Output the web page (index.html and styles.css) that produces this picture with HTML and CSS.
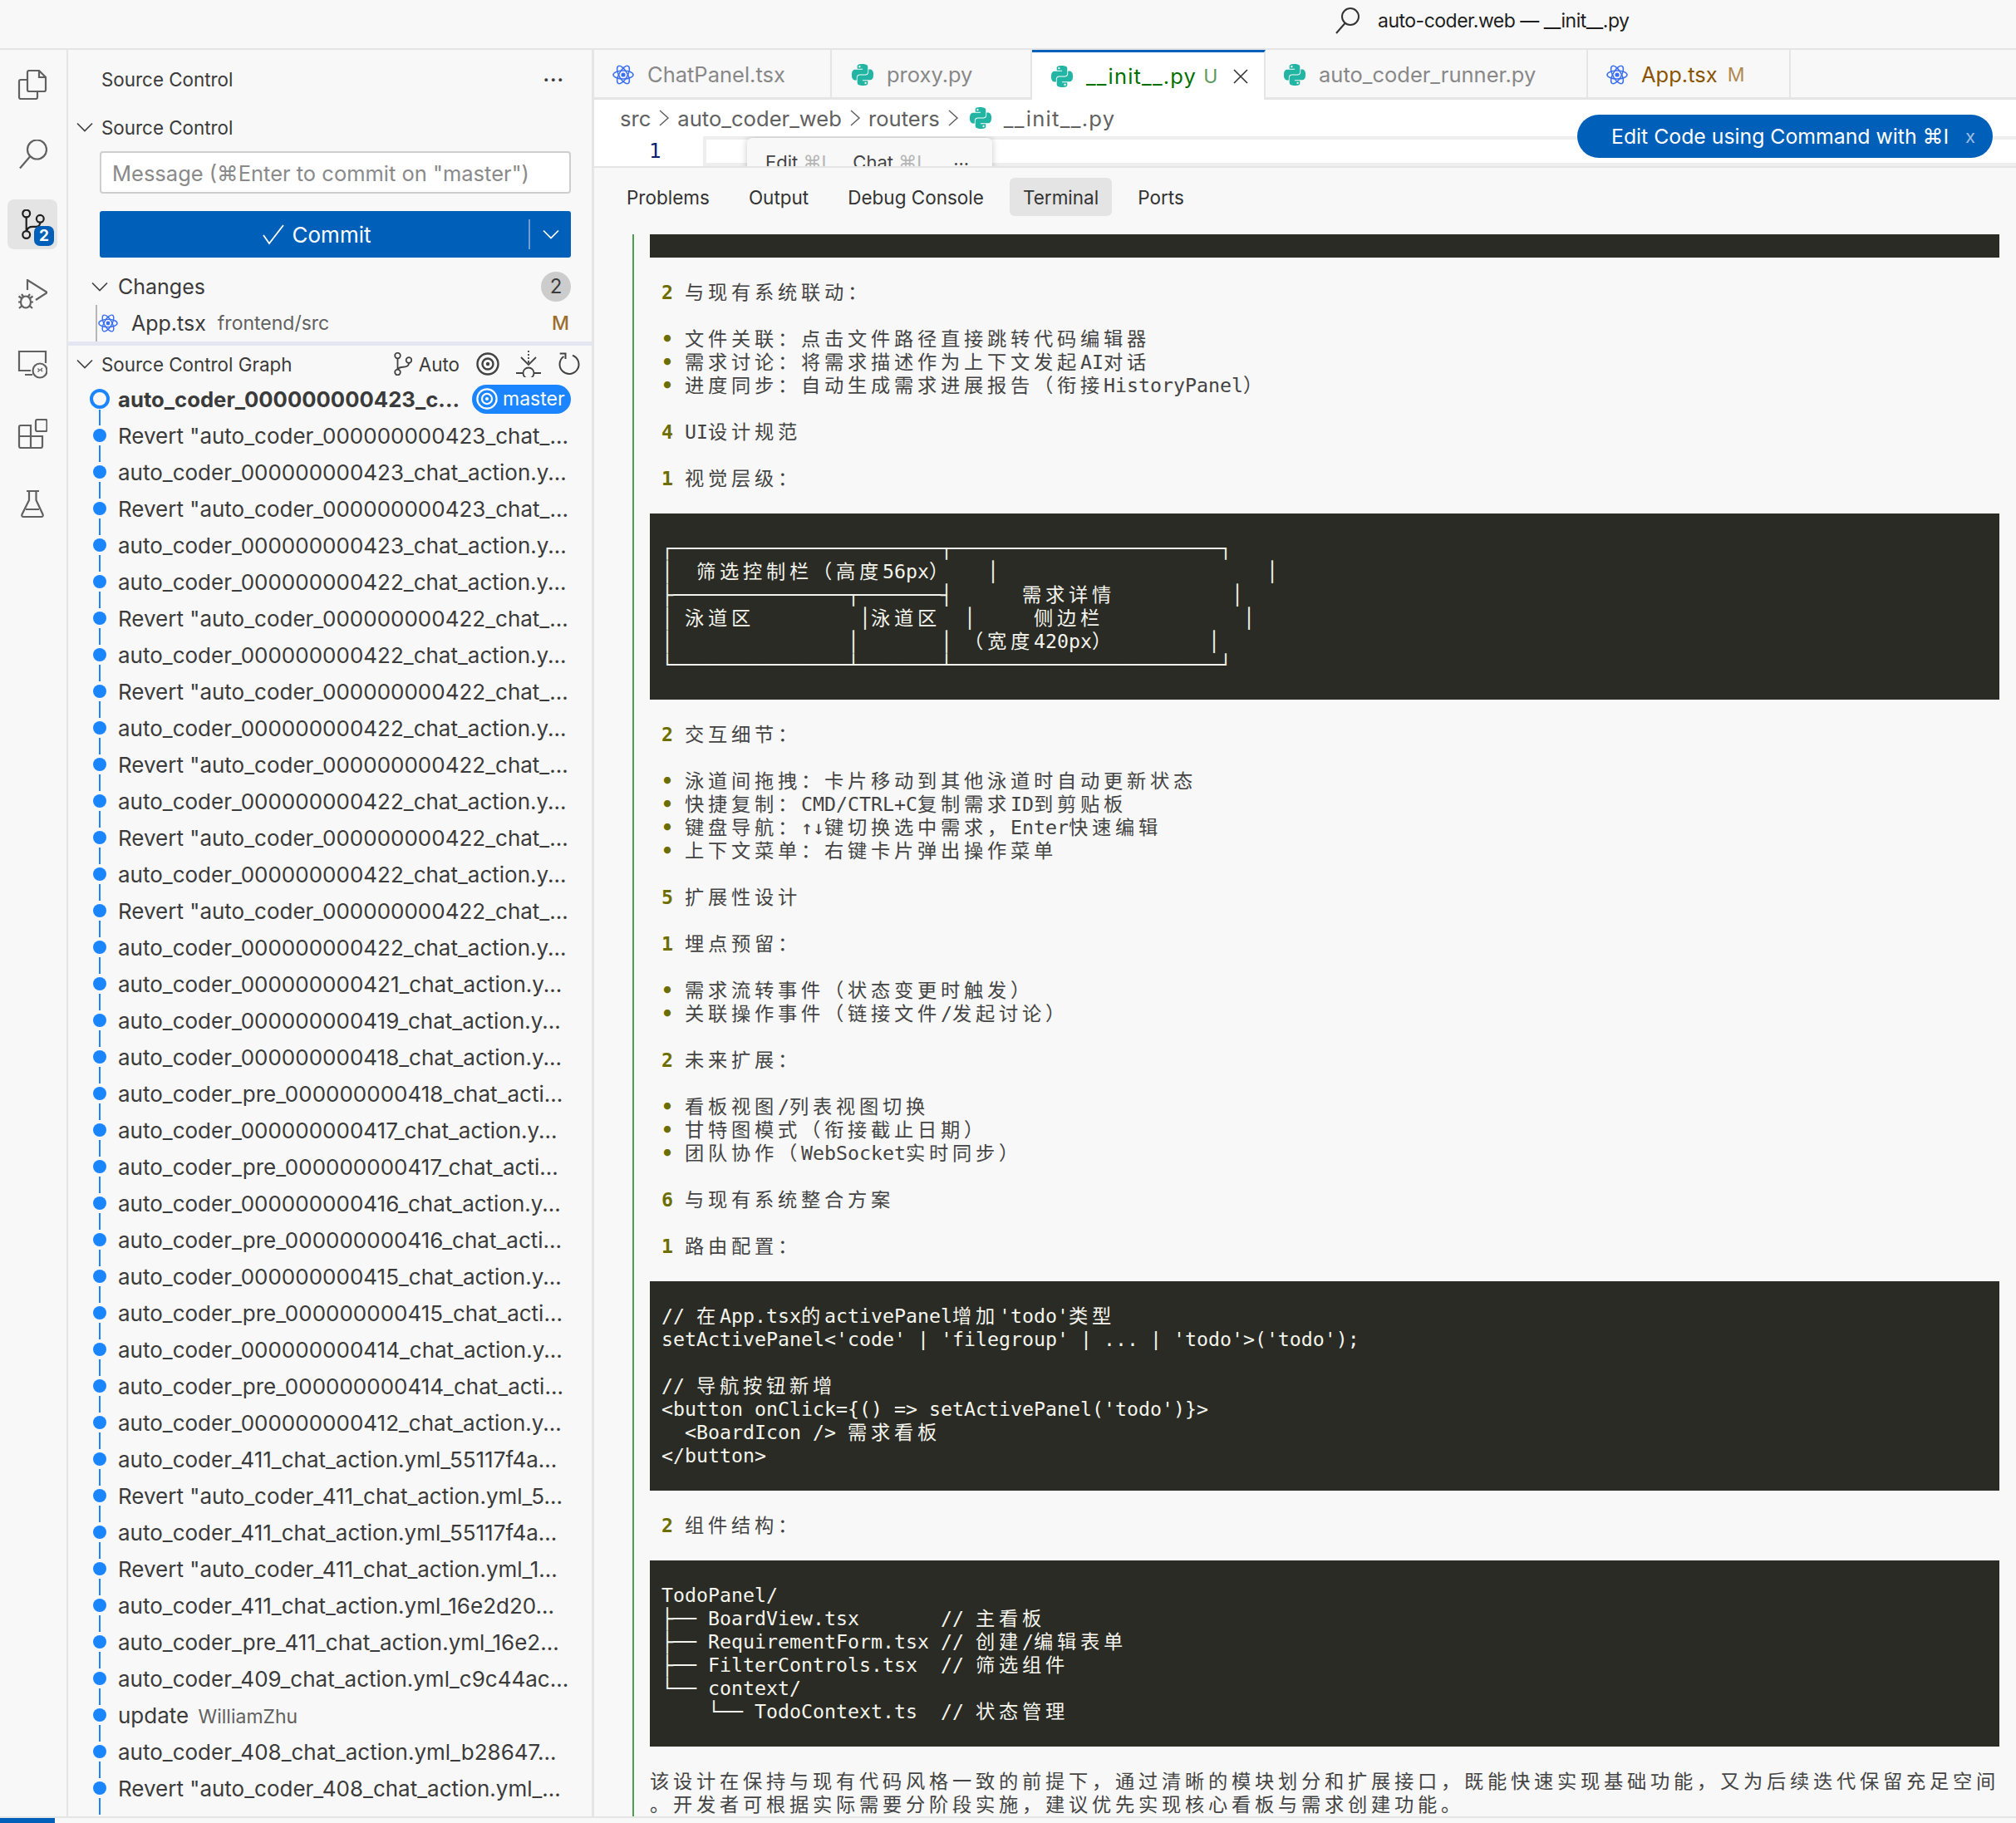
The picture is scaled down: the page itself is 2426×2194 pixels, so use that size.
FILE: index.html
```html
<!DOCTYPE html>
<html lang="zh-CN">
<head>
    <meta charset="UTF-8">
    <title>auto-coder.web — __init__.py</title>
    <link rel="stylesheet" href="styles.css">
</head>
<body>
    <svg class="defs" width="0" height="0">
        <symbol id="react" viewBox="0 0 26 26">
            <g fill="none" stroke="#3b6ff0" stroke-width="1.5">
                <ellipse cx="13" cy="13" rx="12" ry="5"/>
                <ellipse cx="13" cy="13" rx="12" ry="5" transform="rotate(60 13 13)"/>
                <ellipse cx="13" cy="13" rx="12" ry="5" transform="rotate(120 13 13)"/>
            </g>
            <circle cx="13" cy="13" r="2.6" fill="#3b6ff0"/>
        </symbol>
        <symbol id="python" viewBox="0 0 24 24">
            <path fill="#22b5a4" d="M14.25.18l.9.2.73.26.59.3.45.32.34.34.25.34.16.33.1.3.04.26.02.2-.01.13V8.5l-.05.63-.13.55-.21.46-.26.38-.3.31-.33.25-.35.19-.35.14-.33.1-.3.07-.26.04-.21.02H8.77l-.69.05-.59.14-.5.22-.41.27-.33.32-.27.35-.2.36-.15.37-.1.35-.07.32-.04.27-.02.21v3.06H3.17l-.21-.03-.28-.07-.32-.12-.35-.18-.36-.26-.36-.36-.35-.46-.32-.59-.28-.73-.21-.88-.14-1.05-.05-1.23.06-1.22.16-1.04.24-.87.32-.71.36-.57.4-.44.42-.33.42-.24.4-.16.36-.1.32-.05.24-.01h.16l.06.01h8.16v-.83H6.18l-.01-2.75-.02-.37.05-.34.11-.31.17-.28.25-.26.31-.23.38-.2.44-.18.51-.15.58-.12.64-.1.71-.06.77-.04.84-.02 1.27.05zm-6.3 1.98l-.23.33-.08.41.08.41.23.34.33.22.41.09.41-.09.33-.22.23-.34.08-.41-.08-.41-.23-.33-.33-.22-.41-.09-.41.09zm13.09 3.95l.28.06.32.12.35.18.36.27.36.35.35.47.32.59.28.73.21.88.14 1.04.05 1.23-.06 1.23-.16 1.04-.24.86-.32.71-.36.57-.4.45-.42.33-.42.24-.4.16-.36.09-.32.05-.24.02-.16-.01h-8.22v.82h5.84l.01 2.76.02.36-.05.34-.11.31-.17.29-.25.25-.31.24-.38.2-.44.17-.51.15-.58.13-.64.09-.71.07-.77.04-.84.01-1.27-.04-1.07-.14-.9-.2-.73-.25-.59-.3-.45-.33-.34-.34-.25-.34-.16-.33-.1-.3-.04-.25-.02-.2.01-.13v-5.34l.05-.64.13-.54.21-.46.26-.38.3-.32.33-.24.35-.2.35-.14.33-.1.3-.06.26-.04.21-.02.13-.01h5.84l.69-.05.59-.14.5-.21.41-.28.33-.32.27-.35.2-.36.15-.36.1-.35.07-.32.04-.28.02-.21V6.07h2.09l.14.01zm-6.47 14.25l-.23.33-.08.41.08.41.23.33.33.23.41.08.41-.08.33-.23.23-.33.08-.41-.08-.41-.23-.33-.33-.23-.41-.08-.41.08z"/>
        </symbol>
        <symbol id="chev" viewBox="0 0 20 20">
            <path d="M1 5.5l9 9 9-9" fill="none" stroke="currentColor" stroke-width="1.7"/>
        </symbol>
        <symbol id="crumb" viewBox="0 0 32 20">
            <path d="M11 1l10 9-10 9" fill="none" stroke="#616161" stroke-width="1.5"/>
        </symbol>
        <symbol id="target" viewBox="0 0 28 28">
            <g fill="none" stroke="currentColor" stroke-width="2.4">
                <circle cx="14" cy="14" r="12.5"/>
                <circle cx="14" cy="14" r="6.5"/>
            </g>
            <circle cx="14" cy="14" r="2.2" fill="currentColor"/>
        </symbol>
    </svg>

    <header class="titlebar">
        <svg class="title-icon" width="30" height="32" viewBox="0 0 30 32"><g fill="none" stroke="#333" stroke-width="2"><circle cx="18" cy="11" r="10"/><path d="M11.5 19L1 31"/></g></svg>
        <span class="title-text">auto-coder.web — __init__.py</span>
    </header>

    <div class="main">
        <nav class="activity">
            <div class="act-item">
                <svg width="36" height="36" viewBox="0 0 36 36"><path d="M12 3q0-2 2-2h12l8 8v15q0 2-2 2H14q-2 0-2-2zM26 1v8h8M12 12H4q-2 0-2 2v19q0 2 2 2h18q2 0 2-2v-7"/></svg>
            </div>
            <div class="act-item">
                <svg width="36" height="36" viewBox="0 0 36 36"><circle cx="23.5" cy="12" r="11.5"/><path d="M15 20.5L3 34.5"/></svg>
            </div>
            <div class="act-item current">
                <svg width="36" height="36" viewBox="0 0 36 36"><circle cx="10.7" cy="5" r="4.4"/><circle cx="27.3" cy="11.3" r="4.4"/><circle cx="10.7" cy="30.5" r="4.4"/><path d="M10.7 9.5v16.5M27.3 15.8q0 5-5 5h-4q-6 0-7 5"/></svg>
                <span class="act-badge">2</span>
            </div>
            <div class="act-item">
                <svg width="36" height="36" viewBox="0 0 36 36"><path d="M12 13V1l24 15-14 9"/><ellipse cx="10" cy="27.5" rx="6" ry="7"/><path d="M5 18l2.5 3.5M15 18l-2.500 3.500M1 27.500h3M16 27.500h3M2 35l3.500-3M18 35l-3.500-3M1.500 20.500l3.500 2.500M18.500 20.500L15 23"/></svg>
            </div>
            <div class="act-item">
                <svg width="36" height="36" viewBox="0 0 36 36"><path d="M16 26H2V3h32v14M9 31h9"/><circle cx="27" cy="26" r="8.500"/><path d="M24.500 23.500l2 2-2 2M30 23l-2 2 2 2" stroke-width="1.400"/></svg>
            </div>
            <div class="act-item">
                <svg width="36" height="36" viewBox="0 0 36 36"><path d="M4 8h12v13h14v12q0 2-2 2H4q-2 0-2-2V10q0-2 2-2zM2 21h14M16 21v14"/><rect x="22" y="1" width="13.500" height="14" rx="2"/></svg>
            </div>
            <div class="act-item">
                <svg width="36" height="36" viewBox="0 0 36 36"><path d="M11 3h15M14 3v11L5.500 31q-1 3 2 3h21q3 0 2-3L22.500 14V3M10 25h16"/></svg>
            </div>
        </nav>

        <aside class="sidebar">
            <div class="side-title">
                <span>Source Control</span>
                <span class="more">···</span>
            </div>
            <div class="sec-head">
                <svg class="chev" width="20" height="20"><use href="#chev"/></svg>
                <span>Source Control</span>
            </div>
            <div class="msg-input">Message (⌘Enter to commit on "master")</div>
            <div class="commit-btn">
                <span class="commit-main">
                    <svg width="26" height="26" viewBox="0 0 26 26"><path d="M1 14l7 10L25 2" fill="none" stroke="#fff" stroke-width="1.800"/></svg>
                    Commit
                </span>
                <span class="commit-more">
                    <svg class="chev" width="20" height="20"><use href="#chev"/></svg>
                </span>
            </div>
            <div class="changes-head">
                <svg class="chev" width="20" height="20"><use href="#chev"/></svg>
                <span class="grow">Changes</span>
                <span class="count">2</span>
            </div>
            <div class="file-row">
                <svg width="24" height="24"><use href="#react"/></svg>
                <span class="file-name">App.tsx</span>
                <span class="file-path">frontend/src</span>
                <span class="file-m">M</span>
            </div>
            <div class="sash"></div>
            <div class="sec-head graph-head">
                <svg class="chev" width="20" height="20"><use href="#chev"/></svg>
                <span class="grow">Source Control Graph</span>
                <span class="auto">
                    <svg width="22" height="28" viewBox="0 0 22 28"><g fill="none" stroke="#424242" stroke-width="1.800"><circle cx="4.500" cy="4" r="3.300"/><circle cx="18" cy="9.500" r="3.300"/><circle cx="4.500" cy="24" r="3.300"/><path d="M4.500 7.300v13.400M18 12.800q0 4-4 4.500l-5 .7q-4 .6-4.500 3"/></g></svg>
                    Auto
                </span>
                <svg class="tool" width="28" height="28"><use href="#target"/></svg>
                <svg class="tool" width="30" height="32" viewBox="0 0 30 32"><g fill="none" stroke="#424242" stroke-width="1.800"><path d="M15 0v2M15 4v2M15 8v2M15 12v3M6 8l9 9 9-9M0 27h8M22 27h8"/><circle cx="15" cy="27" r="6.500"/></g></svg>
                <svg class="tool" width="28" height="28" viewBox="0 0 28 28"><path d="M18 3.700A11.500 11.500 0 1 1 7.500 5M2.700 1.500H9.500V8" fill="none" stroke="#424242" stroke-width="2"/></svg>
            </div>

            <div class="commit head"><span class="graph"></span><span class="msg">auto_coder_000000000423_c...</span><span class="ref"><svg width="26" height="26"><use href="#target"/></svg>master</span></div>
            <div class="commit"><span class="graph"></span><span class="msg">Revert "auto_coder_000000000423_chat_...</span></div>
            <div class="commit"><span class="graph"></span><span class="msg">auto_coder_000000000423_chat_action.y...</span></div>
            <div class="commit"><span class="graph"></span><span class="msg">Revert "auto_coder_000000000423_chat_...</span></div>
            <div class="commit"><span class="graph"></span><span class="msg">auto_coder_000000000423_chat_action.y...</span></div>
            <div class="commit"><span class="graph"></span><span class="msg">auto_coder_000000000422_chat_action.y...</span></div>
            <div class="commit"><span class="graph"></span><span class="msg">Revert "auto_coder_000000000422_chat_...</span></div>
            <div class="commit"><span class="graph"></span><span class="msg">auto_coder_000000000422_chat_action.y...</span></div>
            <div class="commit"><span class="graph"></span><span class="msg">Revert "auto_coder_000000000422_chat_...</span></div>
            <div class="commit"><span class="graph"></span><span class="msg">auto_coder_000000000422_chat_action.y...</span></div>
            <div class="commit"><span class="graph"></span><span class="msg">Revert "auto_coder_000000000422_chat_...</span></div>
            <div class="commit"><span class="graph"></span><span class="msg">auto_coder_000000000422_chat_action.y...</span></div>
            <div class="commit"><span class="graph"></span><span class="msg">Revert "auto_coder_000000000422_chat_...</span></div>
            <div class="commit"><span class="graph"></span><span class="msg">auto_coder_000000000422_chat_action.y...</span></div>
            <div class="commit"><span class="graph"></span><span class="msg">Revert "auto_coder_000000000422_chat_...</span></div>
            <div class="commit"><span class="graph"></span><span class="msg">auto_coder_000000000422_chat_action.y...</span></div>
            <div class="commit"><span class="graph"></span><span class="msg">auto_coder_000000000421_chat_action.y...</span></div>
            <div class="commit"><span class="graph"></span><span class="msg">auto_coder_000000000419_chat_action.y...</span></div>
            <div class="commit"><span class="graph"></span><span class="msg">auto_coder_000000000418_chat_action.y...</span></div>
            <div class="commit"><span class="graph"></span><span class="msg">auto_coder_pre_000000000418_chat_acti...</span></div>
            <div class="commit"><span class="graph"></span><span class="msg">auto_coder_000000000417_chat_action.y...</span></div>
            <div class="commit"><span class="graph"></span><span class="msg">auto_coder_pre_000000000417_chat_acti...</span></div>
            <div class="commit"><span class="graph"></span><span class="msg">auto_coder_000000000416_chat_action.y...</span></div>
            <div class="commit"><span class="graph"></span><span class="msg">auto_coder_pre_000000000416_chat_acti...</span></div>
            <div class="commit"><span class="graph"></span><span class="msg">auto_coder_000000000415_chat_action.y...</span></div>
            <div class="commit"><span class="graph"></span><span class="msg">auto_coder_pre_000000000415_chat_acti...</span></div>
            <div class="commit"><span class="graph"></span><span class="msg">auto_coder_000000000414_chat_action.y...</span></div>
            <div class="commit"><span class="graph"></span><span class="msg">auto_coder_pre_000000000414_chat_acti...</span></div>
            <div class="commit"><span class="graph"></span><span class="msg">auto_coder_000000000412_chat_action.y...</span></div>
            <div class="commit"><span class="graph"></span><span class="msg">auto_coder_411_chat_action.yml_55117f4a...</span></div>
            <div class="commit"><span class="graph"></span><span class="msg">Revert "auto_coder_411_chat_action.yml_5...</span></div>
            <div class="commit"><span class="graph"></span><span class="msg">auto_coder_411_chat_action.yml_55117f4a...</span></div>
            <div class="commit"><span class="graph"></span><span class="msg">Revert "auto_coder_411_chat_action.yml_1...</span></div>
            <div class="commit"><span class="graph"></span><span class="msg">auto_coder_411_chat_action.yml_16e2d20...</span></div>
            <div class="commit"><span class="graph"></span><span class="msg">auto_coder_pre_411_chat_action.yml_16e2...</span></div>
            <div class="commit"><span class="graph"></span><span class="msg">auto_coder_409_chat_action.yml_c9c44ac...</span></div>
            <div class="commit"><span class="graph"></span><span class="msg">update <span class="author">WilliamZhu</span></span></div>
            <div class="commit"><span class="graph"></span><span class="msg">auto_coder_408_chat_action.yml_b28647...</span></div>
            <div class="commit"><span class="graph"></span><span class="msg">Revert "auto_coder_408_chat_action.yml_...</span></div>
            <div class="commit stub"><span class="graph"></span></div>
        </aside>

        <section class="content">
            <div class="tabs">
                <div class="tab tab-chat"><svg width="26" height="26"><use href="#react"/></svg>ChatPanel.tsx</div>
                <div class="tab tab-proxy"><svg width="26" height="26"><use href="#python"/></svg>proxy.py</div>
                <div class="tab tab-init active"><svg width="26" height="26"><use href="#python"/></svg><span class="added">__init__.py</span><span class="mark-u">U</span><svg class="close" width="18" height="18" viewBox="0 0 18 18"><path d="M1 1l16 16M17 1L1 17" stroke="#333" stroke-width="1.600"/></svg></div>
                <div class="tab tab-runner"><svg width="26" height="26"><use href="#python"/></svg>auto_coder_runner.py</div>
                <div class="tab tab-app"><svg width="26" height="26"><use href="#react"/></svg><span class="modified">App.tsx</span><span class="mark-m">M</span></div>
            </div>

            <div class="editor">
                <div class="crumbs">
                    <span>src</span><svg width="32" height="20"><use href="#crumb"/></svg>
                    <span>auto_coder_web</span><svg width="32" height="20"><use href="#crumb"/></svg>
                    <span>routers</span><svg class="crumb-last" width="32" height="20"><use href="#crumb"/></svg>
                    <svg width="26" height="26"><use href="#python"/></svg>
                    <span class="crumb-file">__init__.py</span>
                </div>
                <div class="edit-line">
                    <div class="gutter">1</div>
                    <div class="line-box">
                        <div class="hint">
                            <span>Edit <em>⌘I</em></span>
                            <span>Chat <em>⌘I</em></span>
                            <span>...</span>
                        </div>
                    </div>
                </div>
                <div class="edit-pill">Edit Code using Command with ⌘I<span class="pill-x">x</span></div>
            </div>

            <div class="panel">
                <div class="panel-tabs">
                    <span class="ptab">Problems</span>
                    <span class="ptab">Output</span>
                    <span class="ptab">Debug Console</span>
                    <span class="ptab on">Terminal</span>
                    <span class="ptab">Ports</span>
                </div>
                <div class="term">
                    <pre class="block"> </pre>
<pre class="out">
 <span class="h">2</span> <span class="w">与现有系统联动：</span>

 <span class="h">•</span> <span class="w">文件关联：点击文件路径直接跳转代码编辑器</span>
 <span class="h">•</span> <span class="w">需求讨论：将需求描述作为上下文发起</span>AI<span class="w">对话</span>
 <span class="h">•</span> <span class="w">进度同步：自动生成需求进展报告（衔接</span>HistoryPanel<span class="w">）</span>

 <span class="h">4</span> UI<span class="w">设计规范</span>

 <span class="h">1</span> <span class="w">视觉层级：</span>
</pre>
<pre class="block">

 ┌───────────────────────┬───────────────────────┐
 │  <span class="w">筛选控制栏（高度</span>56px<span class="w">）</span>   │                       │
 ├───────────────┬───────┤      <span class="w">需求详情</span>          │
 │ <span class="w">泳道区</span>         │<span class="w">泳道区</span>  │     <span class="w">侧边栏</span>            │
 │               │       │ <span class="w">（宽度</span>420px<span class="w">）</span>        │
 └───────────────┴───────┴───────────────────────┘

</pre>
<pre class="out">
 <span class="h">2</span> <span class="w">交互细节：</span>

 <span class="h">•</span> <span class="w">泳道间拖拽：卡片移动到其他泳道时自动更新状态</span>
 <span class="h">•</span> <span class="w">快捷复制：</span>CMD/CTRL+C<span class="w">复制需求</span>ID<span class="w">到剪贴板</span>
 <span class="h">•</span> <span class="w">键盘导航：</span>↑↓<span class="w">键切换选中需求，</span>Enter<span class="w">快速编辑</span>
 <span class="h">•</span> <span class="w">上下文菜单：右键卡片弹出操作菜单</span>

 <span class="h">5</span> <span class="w">扩展性设计</span>

 <span class="h">1</span> <span class="w">埋点预留：</span>

 <span class="h">•</span> <span class="w">需求流转事件（状态变更时触发）</span>
 <span class="h">•</span> <span class="w">关联操作事件（链接文件</span>/<span class="w">发起讨论）</span>

 <span class="h">2</span> <span class="w">未来扩展：</span>

 <span class="h">•</span> <span class="w">看板视图</span>/<span class="w">列表视图切换</span>
 <span class="h">•</span> <span class="w">甘特图模式（衔接截止日期）</span>
 <span class="h">•</span> <span class="w">团队协作（</span>WebSocket<span class="w">实时同步）</span>

 <span class="h">6</span> <span class="w">与现有系统整合方案</span>

 <span class="h">1</span> <span class="w">路由配置：</span>
</pre>
<pre class="block">

 // <span class="w">在</span>App.tsx<span class="w">的</span>activePanel<span class="w">增加</span>'todo'<span class="w">类型</span>
 setActivePanel&lt;'code' | 'filegroup' | ... | 'todo'&gt;('todo');

 // <span class="w">导航按钮新增</span>
 &lt;button onClick={() =&gt; setActivePanel('todo')}&gt;
   &lt;BoardIcon /&gt; <span class="w">需求看板</span>
 &lt;/button&gt;

</pre>
<pre class="out">
 <span class="h">2</span> <span class="w">组件结构：</span>
</pre>
<pre class="block">

 TodoPanel/
 ├── BoardView.tsx       // <span class="w">主看板</span>
 ├── RequirementForm.tsx // <span class="w">创建</span>/<span class="w">编辑表单</span>
 ├── FilterControls.tsx  // <span class="w">筛选组件</span>
 └── context/
     └── TodoContext.ts  // <span class="w">状态管理</span>

</pre>
<pre class="out">
<span class="w">该设计在保持与现有代码风格一致的前提下，通过清晰的模块划分和扩展接口，既能快速实现基础功能，又为后续迭代保留充足空间</span>
<span class="w">。开发者可根据实际需要分阶段实施，建议优先实现核心看板与需求创建功能。</span>
</pre>
                </div>
            </div>
        </section>
    </div>

    <footer class="statusbar"><span class="remote"></span></footer>
</body>
</html>
```

FILE: styles.css
```css
* {
    box-sizing: border-box;
}
html, body {
    margin: 0;
    height: 2194px;
    overflow: hidden;
}
body {
    display: flex;
    flex-direction: column;
    background: #f8f8f8;
    font-family: Inter, "Liberation Sans", sans-serif;
    font-size: 22.4px;
    color: #3b3b3b;
}
svg {
    flex: none;
    display: block;
}
.defs {
    position: absolute;
}
.grow {
    flex: 1;
}

/* title bar */
.titlebar {
    flex: none;
    height: 60px;
    display: flex;
    align-items: center;
    padding: 0 0 8px 1607px;
    border-bottom: 2px solid #e5e5e5;
}
.title-text {
    margin-left: 21px;
    color: #1e1e1e;
    font-size: 23px;
    letter-spacing: -0.5px;
}

.main {
    flex: 1;
    min-height: 0;
    display: flex;
}

/* activity bar */
.activity {
    flex: none;
    width: 82px;
    padding: 12px 0 0 9px;
    display: flex;
    flex-direction: column;
    gap: 24px;
    border-right: 2px solid #e5e5e5;
}
.act-item {
    width: 60px;
    height: 60px;
    border-radius: 8px;
    display: flex;
    align-items: center;
    justify-content: center;
    position: relative;
}
.act-item svg {
    fill: none;
    stroke: #616161;
    stroke-width: 2.2;
}
.act-item.current {
    background: #e4e4e4;
}
.act-item.current svg {
    stroke: #1f1f1f;
}
.act-badge {
    position: absolute;
    left: 32px;
    top: 32px;
    width: 24px;
    height: 24px;
    border-radius: 7px;
    background: #005fb8;
    color: #fff;
    font-size: 19px;
    font-weight: 700;
    line-height: 24px;
    text-align: center;
}

/* side bar */
.sidebar {
    flex: none;
    width: 633px;
    border-right: 3px solid #e5e5e5;
    overflow: hidden;
}
.side-title {
    height: 71px;
    padding: 0 33px 0 40px;
    display: flex;
    align-items: center;
    justify-content: space-between;
}
.more {
    font-weight: 700;
    letter-spacing: 1px;
}
.sec-head {
    height: 44px;
    padding-left: 10px;
    display: flex;
    align-items: center;
    gap: 10px;
}
.chev {
    color: #424242;
}
.msg-input {
    height: 51px;
    margin: 7px 25px 0 38px;
    padding-left: 13px;
    background: #fff;
    border: 2px solid #cecece;
    border-radius: 4px;
    color: #8a8a8a;
    font-size: 25.500px;
    line-height: 49px;
    white-space: nowrap;
    overflow: hidden;
}
.commit-btn {
    height: 56px;
    margin: 21px 25px 0 38px;
    display: flex;
    align-items: center;
    background: #005fb8;
    border-radius: 3px;
    color: #fff;
    font-size: 26px;
}
.commit-main {
    flex: 1;
    display: flex;
    align-items: center;
    justify-content: center;
    gap: 10px;
    padding-left: 6px;
}
.commit-more {
    width: 51px;
    height: 36px;
    display: flex;
    align-items: center;
    justify-content: center;
    border-left: 2px solid #6f9fd2;
}
.commit-more .chev {
    color: #fff;
}
.changes-head {
    height: 44px;
    margin-top: 13px;
    padding: 0 25px 0 28px;
    display: flex;
    align-items: center;
    gap: 12px;
    font-size: 25px;
}
.count {
    width: 36px;
    height: 36px;
    border-radius: 50%;
    background: #cccccc;
    font-size: 24px;
    line-height: 36px;
    text-align: center;
}
.file-row {
    height: 44px;
    margin-left: 33px;
    padding: 0 25px 0 1px;
    border-left: 2px solid #b8b8b8;
    display: flex;
    align-items: center;
}
.file-name {
    margin-left: 16px;
    font-size: 25px;
}
.file-path {
    flex: 1;
    margin-left: 14px;
    color: #616161;
    font-size: 23px;
}
.file-m {
    margin-right: 2px;
    color: #9b6d2e;
    font-size: 23px;
    font-weight: 500;
}
.sash {
    height: 5px;
    background: #e4e6f1;
}
.graph-head {
    height: 42px;
    padding: 2px 13px 0 10px;
    gap: 10px;
}
.auto {
    display: flex;
    align-items: center;
    gap: 8px;
}
.tool {
    margin-left: 10px;
    color: #424242;
}
.commit {
    height: 44px;
    padding-left: 26px;
    display: flex;
    align-items: center;
    font-size: 26px;
}
.graph {
    flex: none;
    width: 24px;
    height: 44px;
    margin-right: 10px;
    display: flex;
    align-items: center;
    justify-content: center;
    background:
        linear-gradient(#1a85ff, #1a85ff) center top / 2px 10px no-repeat,
        linear-gradient(#1a85ff, #1a85ff) center bottom / 2px 10px no-repeat;
}
.graph::before {
    content: "";
    flex: none;
    box-sizing: border-box;
    width: 16px;
    height: 16px;
    border-radius: 50%;
    background: #1a85ff;
}
.commit.head .graph {
    background: linear-gradient(#1a85ff, #1a85ff) center bottom / 2px 9px no-repeat;
}
.commit.head .graph::before {
    width: 24px;
    height: 24px;
    background: none;
    border: 4px solid #1a85ff;
}
.commit.stub .graph {
    background: linear-gradient(#1a85ff, #1a85ff) center top / 2px 10px no-repeat;
}
.commit.stub .graph::before {
    display: none;
}
.msg {
    flex: 1;
    min-width: 0;
    white-space: nowrap;
    overflow: hidden;
}
.commit.head .msg {
    font-size: 25.700px;
    font-weight: 700;
}
.author {
    margin-left: 4px;
    color: #616161;
    font-size: 23px;
}
.ref {
    flex: none;
    width: 119px;
    height: 35px;
    margin-right: 25px;
    padding-left: 5px;
    display: flex;
    align-items: center;
    gap: 6px;
    border-radius: 18px;
    background: #1a85ff;
    color: #fff;
    font-size: 23px;
}

/* tabs */
.content {
    flex: 1;
    min-width: 0;
    display: flex;
    flex-direction: column;
}
.tabs {
    flex: none;
    height: 60px;
    display: flex;
    border-bottom: 3px solid #e5e5e5;
}
.tab {
    height: 57px;
    padding: 2px 0 0 22px;
    display: flex;
    align-items: center;
    gap: 16px;
    border-right: 2px solid #e5e5e5;
    color: #888;
    font-size: 25.500px;
}
.tab-chat {
    width: 286px;
}
.tab-proxy {
    width: 241px;
    padding-left: 24px;
}
.tab-init {
    width: 281px;
    padding-left: 23px;
}
.tab-runner {
    width: 388px;
    padding-left: 22px;
}
.tab-app {
    width: 244px;
    padding-left: 22px;
}
.tab.active {
    height: 60px;
    padding-top: 0;
    background: #fff;
    border-top: 3px solid #005fb8;
}
.added {
    color: #007100;
    letter-spacing: 1.200px;
}
.modified {
    color: #895503;
}
.mark-u {
    margin-left: -8px;
    color: #5a9a5a;
    font-size: 23px;
}
.mark-m {
    margin-left: -4px;
    color: #b08a50;
    font-size: 23px;
}
.close {
    margin-left: 3px;
}

/* editor */
.editor {
    flex: none;
    position: relative;
    background: #fff;
}
.crumbs {
    height: 44px;
    padding-left: 31px;
    display: flex;
    align-items: center;
    color: #616161;
    font-size: 25.600px;
}
.crumb-last {
    margin-right: 4px;
}
.crumb-file {
    margin-left: 15px;
    letter-spacing: 1.300px;
}
.edit-line {
    height: 36px;
    display: flex;
    overflow: hidden;
}
.gutter {
    flex: none;
    width: 131px;
    padding-left: 66px;
    color: #0b216f;
    font-family: "DejaVu Sans Mono", monospace;
    font-size: 24px;
    line-height: 36px;
}
.line-box {
    flex: 1;
    position: relative;
    border: solid #eeeeee;
    border-width: 4px 0 4px 4px;
}
.hint {
    position: absolute;
    left: 49px;
    top: -2px;
    width: 295px;
    height: 60px;
    padding: 16px 22px;
    display: flex;
    gap: 32px;
    background: #f8f8f8;
    border-radius: 6px;
    box-shadow: 0 0 8px rgba(0, 0, 0, 0.22);
    color: #444;
    font-size: 22px;
}
.hint span:last-child {
    margin: -4px 0 0 6px;
}
.hint em {
    color: #b5b5b5;
    font-style: normal;
}
.edit-pill {
    position: absolute;
    left: 1183px;
    top: 18px;
    width: 500px;
    height: 52px;
    padding-left: 41px;
    display: flex;
    align-items: center;
    border-radius: 26px;
    background: #005fb8;
    color: #fff;
    font-size: 24.800px;
    white-space: nowrap;
}
.pill-x {
    margin-left: 20px;
    color: #9dbde2;
    font-size: 22px;
}

/* panel */
.panel {
    flex: 1;
    min-height: 0;
    display: flex;
    flex-direction: column;
    border-top: 2px solid #e5e5e5;
}
.panel-tabs {
    flex: none;
    height: 80px;
    padding: 12px 0 0 23px;
    display: flex;
    align-items: flex-start;
    gap: 15px;
}
.ptab {
    height: 46px;
    padding: 1px 16px 0;
    border-radius: 6px;
    line-height: 46px;
    color: #333;
    font-size: 22.500px;
}
.ptab.on {
    background: #e4e4e4;
}
.term {
    flex: 1;
    min-height: 0;
    margin: 0 20px 0 46px;
    padding-left: 19px;
    border-left: 2px solid #4f9f4f;
    overflow: hidden;
}
.term pre {
    margin: 0;
    font-family: "DejaVu Sans Mono", "Noto Sans CJK SC", monospace;
    font-size: 23.250px;
    line-height: 28px;
}
.term .out {
    padding: 28px 0;
    color: #444;
}
.term .block {
    background: #2a2b25;
    color: #f4f4ec;
}
.h {
    color: #6e6e00;
    font-weight: 700;
}
.w {
    letter-spacing: 4.750px;
}

/* status bar */
.statusbar {
    flex: none;
    height: 8px;
    border-top: 2px solid #e5e5e5;
}
.remote {
    display: block;
    width: 66px;
    height: 6px;
    background: #005fb8;
}
```
